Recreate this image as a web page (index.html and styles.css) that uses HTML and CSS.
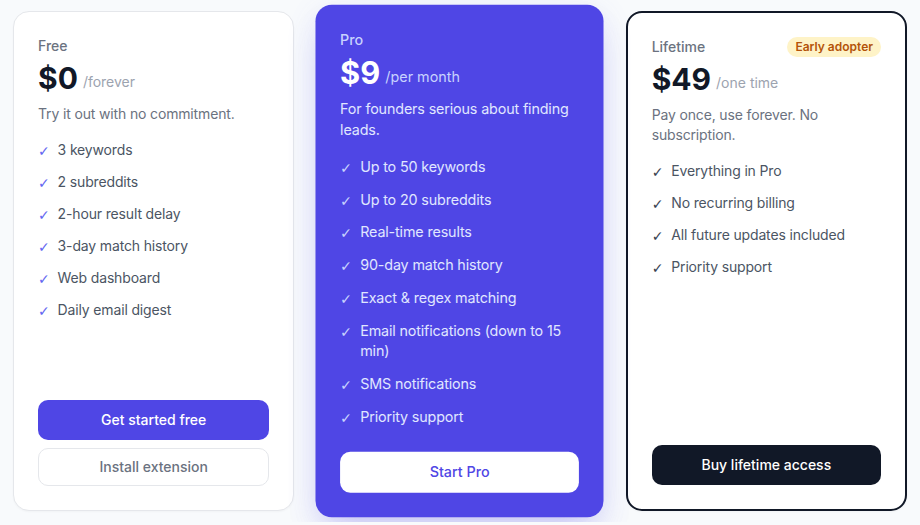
FILE: index.html
```html
<!DOCTYPE html>
<html lang="en">

<head>
    <meta charset="UTF-8">
    <meta name="viewport" content="width=device-width, initial-scale=1.0">
    <title>Pricing</title>
    <link rel="stylesheet" href="styles.css">
</head>

<body>
    <main class="pricing">
        <section class="plan plan-free">
            <div class="plan-head">
                <h3 class="plan-name">Free</h3>
            </div>
            <p class="plan-price"><span class="amount">$0</span><span class="period">/forever</span></p>
            <p class="plan-desc">Try it out with no commitment.</p>
            <ul class="features">
                <li><span class="check">✓</span><span>3 keywords</span></li>
                <li><span class="check">✓</span><span>2 subreddits</span></li>
                <li><span class="check">✓</span><span>2-hour result delay</span></li>
                <li><span class="check">✓</span><span>3-day match history</span></li>
                <li><span class="check">✓</span><span>Web dashboard</span></li>
                <li><span class="check">✓</span><span>Daily email digest</span></li>
            </ul>
            <div class="actions">
                <a href="#" class="btn btn-primary">Get started free</a>
                <a href="#" class="btn btn-outline">Install extension</a>
            </div>
        </section>

        <section class="plan plan-pro">
            <div class="plan-head">
                <h3 class="plan-name">Pro</h3>
            </div>
            <p class="plan-price"><span class="amount">$9</span><span class="period">/per month</span></p>
            <p class="plan-desc">For founders serious about finding leads.</p>
            <ul class="features">
                <li><span class="check">✓</span><span>Up to 50 keywords</span></li>
                <li><span class="check">✓</span><span>Up to 20 subreddits</span></li>
                <li><span class="check">✓</span><span>Real-time results</span></li>
                <li><span class="check">✓</span><span>90-day match history</span></li>
                <li><span class="check">✓</span><span>Exact &amp; regex matching</span></li>
                <li><span class="check">✓</span><span>Email notifications (down to 15 min)</span></li>
                <li><span class="check">✓</span><span>SMS notifications</span></li>
                <li><span class="check">✓</span><span>Priority support</span></li>
            </ul>
            <div class="actions">
                <a href="#" class="btn btn-white">Start Pro</a>
            </div>
        </section>

        <section class="plan plan-lifetime">
            <div class="plan-head">
                <h3 class="plan-name">Lifetime</h3>
                <span class="badge">Early adopter</span>
            </div>
            <p class="plan-price"><span class="amount">$49</span><span class="period">/one time</span></p>
            <p class="plan-desc">Pay once, use forever. No subscription.</p>
            <ul class="features">
                <li><span class="check">✓</span><span>Everything in Pro</span></li>
                <li><span class="check">✓</span><span>No recurring billing</span></li>
                <li><span class="check">✓</span><span>All future updates included</span></li>
                <li><span class="check">✓</span><span>Priority support</span></li>
            </ul>
            <div class="actions">
                <a href="#" class="btn btn-dark">Buy lifetime access</a>
            </div>
        </section>
    </main>
</body>

</html>
```

FILE: styles.css
```css
body {
    margin: 0;
    background: #f8fafc;
    font-family: Inter, "Noto Sans", sans-serif;
    color: #111827;
}

.pricing {
    display: grid;
    grid-template-columns: repeat(3, 1fr);
    gap: 25px;
    padding: 11px 13px;
}

.plan {
    display: flex;
    flex-direction: column;
    padding: 24px;
    background: #fff;
    border: 1px solid #e5e7eb;
    border-radius: 16px;
    box-shadow: 0 1px 2px rgba(15, 23, 42, 0.03);
}

.plan-pro {
    background: #4f46e5;
    border: none;
    transform: scale(1.025);
    box-shadow: 0 8px 30px rgba(99, 102, 241, 0.12), 0 20px 35px -12px rgba(79, 70, 229, 0.25);
}

.plan-lifetime {
    border: 2px solid #111827;
}

.plan-head {
    display: flex;
    justify-content: space-between;
    align-items: center;
    height: 20px;
}

.plan-name {
    margin: 0;
    font-size: 14px;
    line-height: 20px;
    font-weight: 500;
    color: #6b7280;
}

.plan-pro .plan-name {
    color: #c7d2fe;
}

.badge {
    padding: 2px 8px;
    border-radius: 999px;
    background: #fef3c7;
    color: #b45309;
    font-size: 12px;
    line-height: 16px;
    font-weight: 600;
}

.plan-price {
    display: flex;
    align-items: flex-end;
    gap: 5px;
    margin: 4px 0 0;
}

.amount {
    font-size: 30px;
    line-height: 36px;
    font-weight: 700;
    color: #111827;
}

.period {
    padding-bottom: 4px;
    font-size: 14px;
    line-height: 20px;
    color: #9ca3af;
}

.plan-pro .amount {
    color: #fff;
}

.plan-pro .period {
    color: #c7d2fe;
}

.plan-desc {
    margin: 8px 0 0;
    font-size: 14px;
    line-height: 20px;
    letter-spacing: -0.15px;
    color: #6b7280;
}

.plan-pro .plan-desc {
    color: #e0e7ff;
}

.features {
    list-style: none;
    margin: 16px 0 0;
    padding: 0;
    display: flex;
    flex-direction: column;
    gap: 12px;
}

.features li {
    display: flex;
    gap: 8px;
    font-size: 14px;
    line-height: 20px;
    letter-spacing: -0.15px;
    color: #4b5563;
}

.check {
    flex-shrink: 0;
    margin-top: 3px;
    font-family: "DejaVu Sans", sans-serif;
    font-size: 14px;
    line-height: 16px;
    color: #6366f1;
}

.plan-pro .features li {
    color: #e0e7ff;
}

.plan-pro .check {
    color: #c7d2fe;
}

.plan-lifetime .check {
    color: #374151;
}

.actions {
    margin-top: auto;
    padding-top: 24px;
    display: flex;
    flex-direction: column;
    gap: 8px;
}

.btn {
    display: block;
    padding: 10px 16px;
    border-radius: 10px;
    font-size: 14px;
    line-height: 20px;
    font-weight: 500;
    text-align: center;
    text-decoration: none;
}

.btn-primary {
    background: #4f46e5;
    color: #fff;
}

.btn-outline {
    padding: 8px 16px;
    border: 1px solid #e5e7eb;
    color: #6b7280;
}

.btn-white {
    background: #fff;
    color: #4f46e5;
}

.btn-dark {
    background: #111827;
    color: #fff;
}
```
